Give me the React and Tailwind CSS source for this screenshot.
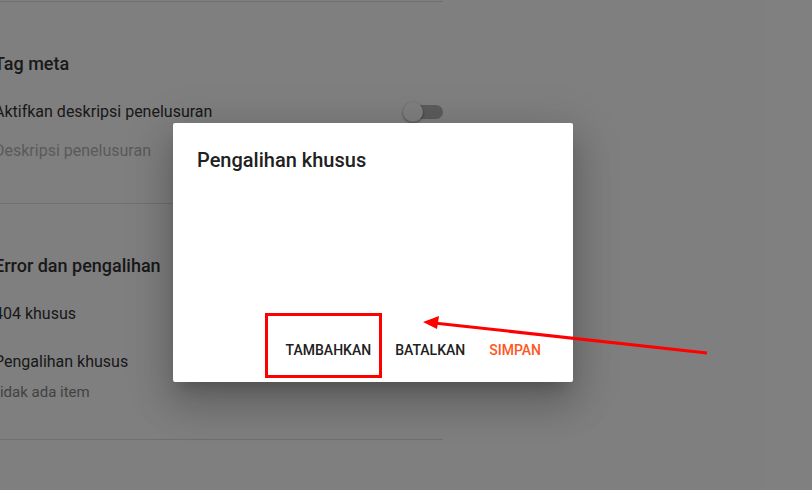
import React from "react";

function Toggle() {
  return (
    <div className="relative w-[40px] h-[20px] flex items-center">
      <div className="ml-[4px] w-[36px] h-[14px] rounded-full bg-[#b9b9b9]" />
      <div className="absolute left-0 top-0 w-[20px] h-[20px] rounded-full bg-white shadow-[0_1px_3px_rgba(0,0,0,0.45)]" />
    </div>
  );
}

function Settings() {
  return (
    <div className="ml-[-6px] w-[449px] flex flex-col text-[#333]">
      <div className="mt-px h-px bg-[#dedede]" />

      <div className="pt-[50px] text-[18px] leading-[24px] font-medium">Tag meta</div>
      <div className="mt-[24px] h-[24px] flex items-center justify-between">
        <span className="text-[16px] leading-[24px]">Aktifkan deskripsi penelusuran</span>
        <Toggle />
      </div>
      <div className="mt-[15px] text-[16px] leading-[24px] text-[#b5b5b5]">Deskripsi penelusuran</div>

      <div className="mt-[40px] h-px bg-[#dedede]" />

      <div className="pt-[50px] text-[18px] leading-[24px] font-medium">Error dan pengalihan</div>
      <div className="mt-[24px] text-[16px] leading-[24px]">404 khusus</div>
      <div className="mt-[24px] text-[16px] leading-[24px]">Pengalihan khusus</div>
      <div className="mt-[8px] ml-[-3px] text-[15px] leading-[20px] text-[#858585]">Tidak ada item</div>

      <div className="mt-[37px] h-px bg-[#dedede]" />
    </div>
  );
}

function Dialog() {
  return (
    <div className="absolute left-[173px] top-[123px] w-[400px] h-[259px] bg-white rounded-[2px] shadow-[0_11px_15px_-7px_rgba(0,0,0,0.2),0_24px_38px_3px_rgba(0,0,0,0.14),0_9px_46px_8px_rgba(0,0,0,0.12)] flex flex-col">
      <div className="px-6 pt-[25px] text-[20px] leading-[24px] font-medium text-[#212121]">Pengalihan khusus</div>
      <div className="flex-1" />
      <div className="flex justify-end gap-2 pr-6 pb-[14px]">
        <button className="h-9 px-2 text-[14px] font-medium uppercase text-[#212121]">Tambahkan</button>
        <button className="h-9 px-2 text-[14px] font-medium uppercase text-[#212121]">Batalkan</button>
        <button className="h-9 px-2 text-[14px] font-medium uppercase text-[#ff5722]">Simpan</button>
      </div>
      <div className="absolute left-[92px] top-[190px] w-[117px] h-[65px] border-[3px] border-[#ff0000]" />
    </div>
  );
}

export default function App() {
  return (
    <div
      className="relative w-[812px] h-[490px] overflow-hidden bg-white"
      style={{ fontFamily: "Roboto, 'Liberation Sans', sans-serif" }}
    >
      <Settings />
      <div className="absolute inset-0 bg-black/50" />
      <Dialog />
      <svg className="absolute inset-0" width="812" height="490" viewBox="0 0 812 490">
        <line x1="707" y1="353" x2="434" y2="323" stroke="#ff0000" strokeWidth="3" />
        <polygon points="423,322 439,316 437,329" fill="#ff0000" />
      </svg>
    </div>
  );
}
